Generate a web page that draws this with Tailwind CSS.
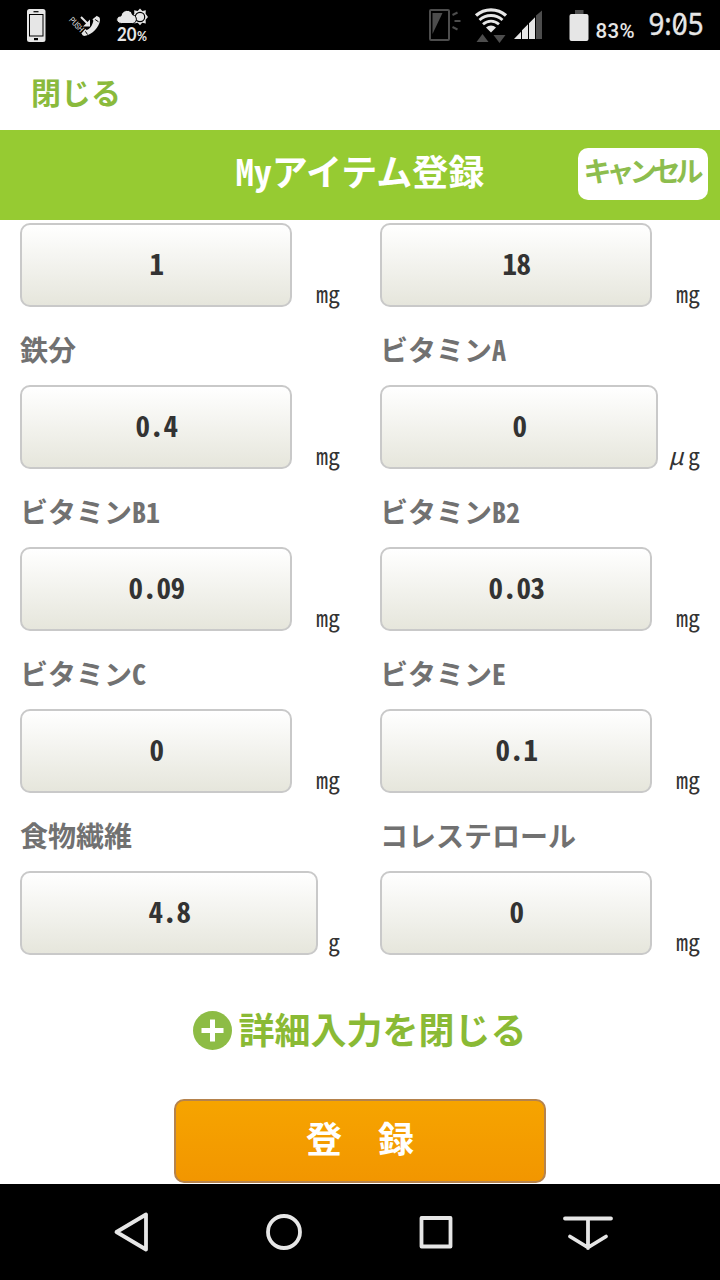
<!DOCTYPE html>
<html lang="ja">
<head>
  <meta charset="UTF-8" />
  <meta name="viewport" content="width=device-width, initial-scale=1.0"/>
  <title>Myアイテム登録</title>
  <script src="https://cdn.jsdelivr.net/npm/@tailwindcss/browser@4"></script>
  <style>
    body {
      font-family: 'Noto Sans CJK JP', sans-serif;
    }
    /* half-width latin letters and digits */
    .hw {
      font-feature-settings: 'hwid';
    }
  </style>
</head>
<body class="w-[720px] h-[1280px] overflow-hidden bg-white flex flex-col text-[#333333]">

  <!-- Status bar -->
  <div class="h-[50px] shrink-0 bg-black flex justify-between">
    <svg width="160" height="50" viewBox="0 0 160 50" fill="#e6e6e6">
      <rect x="27" y="9" width="18.500" height="33" rx="2.500"/>
      <rect x="29.500" y="14.500" width="13.500" height="21.500" fill="none" stroke="#000" stroke-width="1"/>
      <path d="M33.500 11.700h5" stroke="#000" stroke-width="1.200"/>
      <rect x="34" y="38" width="4" height="2.200" fill="#000"/>
      <text transform="translate(68.500 20.500) rotate(46)" font-family="Roboto" font-size="8.500" textLength="17" lengthAdjust="spacingAndGlyphs">PUSH</text>
      <path d="M93.500 19.500l3.800-3c1.500 0 2.900 1 2.700 3.800-.8 7-8 14.300-14.500 15.500-1.700.3-3-.2-3.500-1.200l4-4.300c4-1.300 6.700-4.800 7.500-10.800z"/>
      <path d="M94.200 18.800l4.300 3M84.500 30l3 4.500" stroke="#000" stroke-width="1"/>
      <path d="M93 20l4.500-3.500M82 34l4-4.500" stroke="#e6e6e6" stroke-width="1.800"/>
      <path d="M81 17l7 7" stroke="#e6e6e6" stroke-width="2"/>
      <path d="M90 19.500V26.500H83z"/>
      <path d="M140 8.500l2.300 2.500 3.500-.8-.2 3.600 2.400 3.200-2.400 2.800.2 3.700-3.600-.7-2.200 2.400-2.300-2.400-3.500.7.100-3.700-2-2.800 2-3.200-.1-3.600 3.500.8z"/>
      <circle cx="140" cy="17" r="4.700" fill="none" stroke="#000" stroke-width="1.200"/>
      <path d="M121.500 23.500c-6.300 0-6.300-7.500-.6-7.500 1.200-7 10.300-7.500 11.600-1.300 5.500 1 4.800 8.800 0 8.800z" stroke="#000" stroke-width="1"/>
      <text x="117" y="41" font-family="Lato" font-weight="700" font-size="18" textLength="19.500" lengthAdjust="spacingAndGlyphs">20</text>
      <text x="137" y="41" font-family="Lato" font-weight="700" font-size="13" textLength="10" lengthAdjust="spacingAndGlyphs">%</text>
    </svg>
    <svg width="300" height="50" viewBox="420 0 300 50" fill="#e6e6e6">
      <rect x="430" y="10" width="19" height="30" rx="1" fill="none" stroke="#4d4d4d" stroke-width="2"/>
      <path d="M432.500 13h10l-10 21z" fill="#4d4d4d"/>
      <path d="M452.500 15l5-2.500M454.500 21h6M452.500 27l5 2.500" stroke="#4d4d4d" stroke-width="2"/>
      <path d="M476 15.500c8.500-7.500 21.500-7.500 30 0" fill="none" stroke="#e6e6e6" stroke-width="3.400"/>
      <path d="M479.500 20c6.500-6 16.500-6 23 0" fill="none" stroke="#e6e6e6" stroke-width="2.800"/>
      <path d="M483 24.300c4.700-4.200 11.300-4.200 16 0" fill="none" stroke="#e6e6e6" stroke-width="2.800"/>
      <path d="M486 27.500c3-2.700 7-2.700 10 0l-5 5z"/>
      <path d="M476.500 42l6-8 6 8zM493.500 35h12l-6 8z" fill="#4d4d4d"/>
      <path d="M514 39l7-7.200V39zM522 30.300l6-6V39h-6zM529 23.300l6-6V39h-6z"/>
      <path d="M536 15.500l6-5V39h-6z" fill="#4d4d4d"/>
      <rect x="575" y="10" width="8.500" height="6" fill="#4d4d4d"/>
      <rect x="569.500" y="14" width="19" height="27" rx="2"/>
      <text x="595.500" y="38" font-family="Roboto" font-weight="500" font-size="20.500" textLength="39">83%</text>
      <text x="648.500" y="35" font-family="Noto Sans" font-size="31.500" textLength="55" lengthAdjust="spacingAndGlyphs" stroke="#e6e6e6" stroke-width=".4">9:05</text>
      <path d="M676.500 30.500l7-13" stroke="#e6e6e6" stroke-width="1.800"/>
    </svg>
  </div>

  <!-- Close link -->
  <div class="h-20 shrink-0 flex items-center px-[31px] pt-0.5">
    <a href="#" class="text-[30px] leading-none font-bold text-[#8aba3c]">閉じる</a>
  </div>

  <!-- Title bar -->
  <header class="h-[90px] shrink-0 bg-[#96cb32] grid grid-cols-[1fr_auto_1fr] px-3">
    <span></span>
    <h1 class="hw pt-[22px] text-[36px] leading-[36px] font-bold text-white">Myアイテム登録</h1>
    <button class="justify-self-end mt-[18px] w-[130px] h-[52px] rounded-[10px] bg-white text-[#8dbd4e] text-[28px] leading-none font-bold tracking-[-5px] whitespace-nowrap pb-2 pr-1">キャンセル</button>
  </header>

  <!-- Nutrients -->
  <main class="grow overflow-hidden">
    <div id="fields" class="grid grid-cols-2 pt-[3px]"></div>

    <div class="mt-[51px] h-12 flex items-center justify-center gap-1.5">
      <svg width="39" height="39" viewBox="0 0 39 39">
        <circle cx="19.500" cy="19.500" r="19.500" fill="#8dbc45"/>
        <path d="M19.500 8.500v22M8.500 19.500h22" stroke="#fff" stroke-width="5"/>
      </svg>
      <a href="#" class="pb-1 text-[36px] leading-[36px] font-bold text-[#8aba35]">詳細入力を閉じる</a>
    </div>

    <button class="block mx-auto mt-[45px] w-[372px] h-[84px] rounded-[10px] border-2 border-[#b5834d] bg-linear-to-b from-[#f6a400] to-[#f29600] pb-2 text-[36px] leading-none font-bold text-white">登　録</button>
  </main>

  <!-- Navigation bar -->
  <nav class="h-24 shrink-0 bg-black">
    <svg width="720" height="96" viewBox="0 0 720 96" fill="none" stroke="#e6e6e6" stroke-width="3.800" stroke-linecap="round" stroke-linejoin="round">
      <path d="M146 30.500v35L116.500 48z"/>
      <circle cx="284" cy="48" r="16"/>
      <rect x="421.500" y="34" width="29" height="28.500"/>
      <path d="M565 34.500h46M588 35v29M570 52.500L588 63.500l18-11"/>
    </svg>
  </nav>

  <template id="fieldTemplate">
    <div class="h-[162px] px-5">
      <div class="flex items-end justify-between">
        <div class="value hw h-[84px] grow rounded-[10px] border-2 border-[#c9c9c9] bg-linear-to-b from-white to-[#e6e6dc] flex items-center justify-center pb-1.5 pl-px text-[29px] leading-none font-bold tracking-[-0.5px]"></div>
        <div class="unit hw shrink-0 pb-0.5 text-right text-[24px] leading-6"></div>
      </div>
      <div class="label hw mt-7 text-[28px] leading-7 font-bold text-[#717171] whitespace-nowrap"></div>
    </div>
  </template>

  <script>
    // each entry: value, unit, label printed under the box (name of the next row's field)
    const fields = [
      ['1', 'mg', '鉄分'],
      ['18', 'mg', 'ビタミンA'],
      ['0.4', 'mg', 'ビタミンB1'],
      ['0', 'μg', 'ビタミンB2'],
      ['0.09', 'mg', 'ビタミンC'],
      ['0.03', 'mg', 'ビタミンE'],
      ['0', 'mg', '食物繊維'],
      ['0.1', 'mg', 'コレステロール'],
      ['4.8', 'g', ''],
      ['0', 'mg', ''],
    ];
    // the box takes what the unit leaves free
    const unitClass = {
      mg: 'w-[48px]',
      'μg': 'w-[42px]',
      g: 'w-[22px]',
    };

    const grid = document.getElementById('fields');
    const template = document.getElementById('fieldTemplate');

    fields.forEach(([value, unit, label], i) => {
      const item = template.content.cloneNode(true);
      const unitBox = item.querySelector('.unit');
      item.querySelector('.value').textContent = value;
      unitBox.classList.add(unitClass[unit]);
      // the greek letter takes a full-width cell
      unitBox.innerHTML = unit.replace('μ', '<i class="inline-block w-5 text-center mr-0.5">μ</i>');
      item.querySelector('.label').textContent = label;
      // last row has no labels below
      if (i >= fields.length - 2) {
        item.firstElementChild.classList.replace('h-[162px]', 'h-[84px]');
        item.querySelector('.label').remove();
      }
      grid.appendChild(item);
    });
  </script>
</body>
</html>
